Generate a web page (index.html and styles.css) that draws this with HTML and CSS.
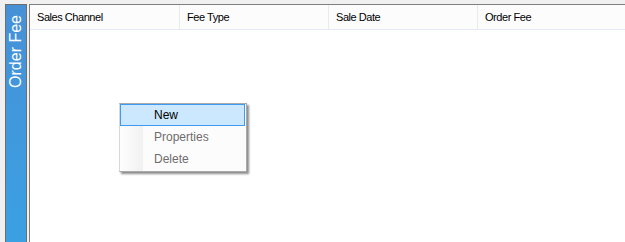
FILE: index.html
```html
<!DOCTYPE html>
<html lang="en">
<head>
  <meta charset="UTF-8" />
  <title>Order Fee</title>
  <link rel="stylesheet" href="styles.css">
</head>
<body>
  <div id="frame">
    <div id="side">
      <div id="side-title">Order Fee</div>
    </div>
    <div id="grid">
      <div class="head">
        <div class="col first">Sales Channel</div>
        <div class="col">Fee Type</div>
        <div class="col">Sale Date</div>
        <div class="col last">Order Fee</div>
      </div>
      <div class="rows"></div>
    </div>
  </div>
  <div id="menu">
    <div class="item hot">New</div>
    <div class="item off">Properties</div>
    <div class="item off">Delete</div>
  </div>
</body>
</html>
```

FILE: styles.css
```css
html, body {
  margin: 0;
  padding: 0;
  height: 100%;
  overflow: hidden;
  background: #f0f0f0;
  font-family: "Liberation Sans", Arial, sans-serif;
}
#frame {
  display: flex;
  height: 100%;
  padding-top: 4px;
  box-sizing: border-box;
}
#side {
  margin-left: 5px;
  width: 20px;
  border: 1px solid #6e6e6e;
  border-bottom: none;
  background: linear-gradient(to bottom, #4790d6, #3aa1e3);
  display: flex;
  flex-direction: column;
  align-items: center;
}
#side-title {
  writing-mode: vertical-rl;
  transform: rotate(180deg);
  color: white;
  font-size: 16px;
  line-height: 20px;
  margin-top: 10px;
  white-space: nowrap;
}
#grid {
  flex: 1;
  margin-left: 2px;
  border-left: 1px solid #7f7f7f;
  border-top: 1px solid #7f7f7f;
  background: white;
  display: flex;
  flex-direction: column;
}
.head {
  display: flex;
  height: 24px;
  background: #fcfcfc;
  border-bottom: 1px solid #e4ebf4;
}
.col {
  width: 149px;
  padding-left: 7px;
  box-sizing: border-box;
  border-right: 1px solid #e6ebf2;
  font-size: 11px;
  letter-spacing: -0.45px;
  line-height: 24px;
  color: #000;
}
.col.first {
  width: 150px;
}
.col.last {
  flex: 1;
  border-right: none;
}
.rows {
  flex: 1;
}
#menu {
  position: absolute;
  left: 119px;
  top: 103px;
  width: 125px;
  padding: 0 1px 1px 0;
  border: 1px solid #a9a9a9;
  border-left-color: #d8d8d8;
  background: linear-gradient(to right, #fefefe 0, #f1f1f1 23px, #fcfcfc 23px);
  box-shadow: 2px 2px 2px rgba(0, 0, 0, 0.45);
}
.item {
  height: 20px;
  line-height: 20px;
  padding-left: 33px;
  border: 1px solid transparent;
  font-size: 12px;
  color: #000;
}
.item.hot {
  background: #cce8ff;
  border-color: #3d9bf5;
}
.item.off {
  color: #6d6d6d;
}
```
